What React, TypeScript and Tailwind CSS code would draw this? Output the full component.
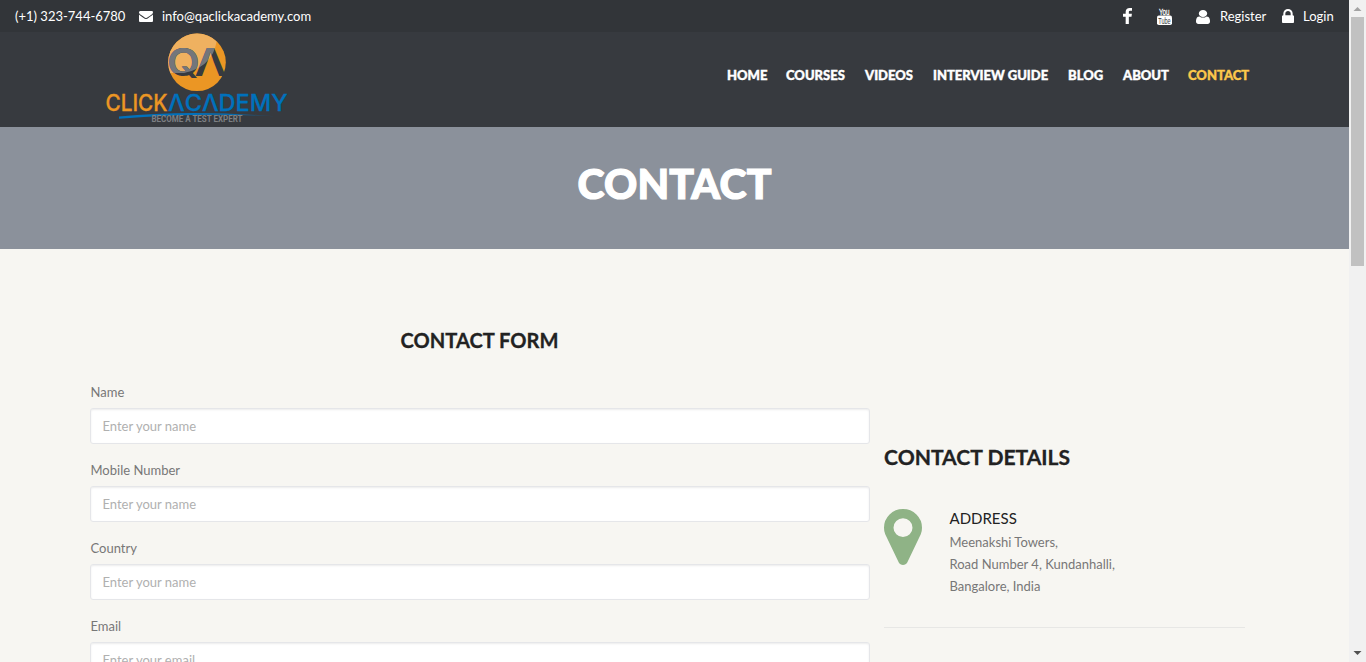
import type { ReactNode } from "react";

const paths = {
  envelope:
    "M1792 710v794q0 66-47 113t-113 47h-1472q-66 0-113-47t-47-113v-794q44 49 101 87 362 246 497 345 57 42 92.5 65.5t94.5 48 110 24.5h2q51 0 110-24.5t94.5-48 92.5-65.5q170-123 498-345 57-39 100-87zm0-294q0 79-49 151t-122 123q-376 261-468 325-10 7-42.5 31t-54 38.5-52 32.5-57.5 27-50 9h-2q-23 0-50-9t-57.5-27-52-32.5-54-38.5-42.5-31q-91-64-262-182.5t-205-142.5q-62-42-117-115.5t-55-136.5q0-78 41.5-130t118.5-52h1472q65 0 112.5 47t47.5 113z",
  facebook:
    "M1343 12v264h-157q-86 0-116 36t-30 108v189h293l-39 296h-254v759h-306v-759h-255v-296h255v-218q0-186 104-288.5t277-102.5q147 0 228 12z",
  user: "M1536 1399q0 109-62.5 187t-150.5 78h-854q-88 0-150.5-78t-62.5-187q0-85 8.5-160.5t31.5-152 58.5-131 94-89 134.5-34.5q131 128 313 128t313-128q76 0 134.5 34.5t94 89 58.5 131 31.5 152 8.5 160.5zm-256-887q0 159-112.5 271.5t-271.5 112.5-271.5-112.5-112.5-271.5 112.5-271.5 271.5-112.5 271.5 112.5 112.5 271.5z",
  lock: "M640 768h512v-192q0-106-75-181t-181-75-181 75-75 181v192zm832 96v576q0 40-28 68t-68 28h-960q-40 0-68-28t-28-68v-576q0-40 28-68t68-28h32v-192q0-184 132-316t316-132 316 132 132 316v192h32q40 0 68 28t28 68z",
  marker:
    "M1152 640q0-106-75-181t-181-75-181 75-75 181 75 181 181 75 181-75 75-181zm256 0q0 109-33 179l-364 774q-16 33-47.5 52t-67.5 19-67.5-19-46.5-52l-365-774q-33-70-33-179 0-212 150-362t362-150 362 150 150 362z",
};

function Icon({ d, box, className }: { d: string; box: string; className: string }) {
  return (
    <svg viewBox={box} preserveAspectRatio="none" className={`shrink-0 fill-current ${className}`}>
      <path d={d} />
    </svg>
  );
}

function YouTubeIcon() {
  return (
    <svg width="15" height="17" viewBox="0 0 15 17" className="shrink-0 overflow-visible font-['Liberation_Sans',sans-serif]">
      <text x="2" y="7.2" fontSize="9.500" textLength="10.500" lengthAdjust="spacingAndGlyphs" fill="#fff" stroke="#fff" strokeWidth="0.3">You</text>
      <rect x="0" y="7.6" width="15" height="9.400" rx="1.8" fill="#fff" />
      <text x="1.3" y="15.6" fontSize="9.500" textLength="12.4" lengthAdjust="spacingAndGlyphs" fill="#323539">Tube</text>
    </svg>
  );
}

function Monogram({ fill }: { fill: string }) {
  return (
    <g className="font-['Inter',sans-serif]" fontSize="38" fontWeight="600" fill={fill}>
      <text x="167" y="76.300" textLength="33" lengthAdjust="spacingAndGlyphs">Q</text>
      <text x="194.500" y="76.300" textLength="32" lengthAdjust="spacingAndGlyphs">Λ</text>
    </g>
  );
}

function Logo() {
  return (
    <svg width="182" height="92" viewBox="106 33 182 92" className="block overflow-visible font-['Liberation_Sans',sans-serif]">
      <defs>
        <clipPath id="disc"><circle cx="197" cy="62.3" r="28.8" /></clipPath>
        <clipPath id="shine"><path d="M160 30H217.500Q218 66 184 73L160 73Z" /></clipPath>
        <linearGradient id="swoosh">
          <stop offset="0" stopColor="#0071bc" />
          <stop offset="0.7" stopColor="#0071bc" />
          <stop offset="1" stopColor="#0071bc" stopOpacity="0.2" />
        </linearGradient>
      </defs>
      <circle cx="197" cy="62.3" r="28.8" fill="#eb9624" />
      <g clipPath="url(#disc)">
        <g clipPath="url(#shine)"><rect x="160" y="30" width="70" height="60" fill="#efb160" /></g>
      </g>
      <Monogram fill="#373a3f" />
      <g clipPath="url(#shine)"><Monogram fill="#73767b" /></g>
      <g className="font-['Inter',sans-serif]" fontSize="22.500" fontWeight="500">
        <text x="105.500" y="111.300" textLength="62" lengthAdjust="spacingAndGlyphs" fill="#eb9624" stroke="#eb9624" strokeWidth="0.3">CLICK</text>
        <text x="168" y="111.300" textLength="119.500" lengthAdjust="spacingAndGlyphs" fill="#0071bc" stroke="#0071bc" strokeWidth="0.3">ΛCΛDEMY</text>
      </g>
      <path d="M119 116.500Q190 109.500 275 116.300Q200 112 119 118.800Z" fill="url(#swoosh)" />
      <g className="font-['Roboto',sans-serif]">
        <text x="151.500" y="122.400" fontSize="8.300" fontWeight="700" textLength="91" lengthAdjust="spacingAndGlyphs" fill="#7c7f83">BECOME A TEST EXPERT</text>
      </g>
    </svg>
  );
}

function Field({ label, placeholder }: { label: string; placeholder: string }) {
  return (
    <label className="mb-[15px] block">
      <span className="mb-[5px] block h-[22px] pl-[0.5px] text-[13px] leading-[22px] text-[#777]">{label}</span>
      <input
        placeholder={placeholder}
        className="block h-9 w-full rounded-[3px] border border-[#e5e6e9] bg-white px-[11.5px] text-[13px] shadow-[inset_0_1px_2px_rgba(0,0,0,0.08)] outline-none placeholder:text-[#b0b0b0]"
      />
    </label>
  );
}

function NavItem({ children, active = false, className }: { children: ReactNode; active?: boolean; className: string }) {
  return (
    <a className={`block whitespace-nowrap ${active ? "text-[#fdc84b]" : "text-white"} ${className}`}>{children}</a>
  );
}

export default function App() {
  return (
    <div className="flex h-[662px] w-[1366px] overflow-hidden bg-[#f7f6f2] font-['Lato',sans-serif]">
      <div className="w-[1349px] shrink-0">
        <div className="flex h-8 items-center bg-[#323539] text-[13px] text-white">
          <span className="ml-[15px] w-[124px] pt-[2px] whitespace-nowrap">(+1) 323-744-6780</span>
          <Icon d={paths.envelope} box="0 256 1792 1408" className="mt-px h-[11px] w-[14px]" />
          <span className="ml-[9px] pt-[2px]">info@qaclickacademy.com</span>
          <div className="ml-auto flex h-8 items-center">
            <Icon d={paths.facebook} box="479 0 864 1664" className="mr-[25px] h-4 w-[9px]" />
            <YouTubeIcon />
            <Icon d={paths.user} box="256 128 1280 1536" className="mt-px ml-[24px] h-[14px] w-[14px]" />
            <span className="ml-[10px] w-[62px] pt-[2px]">Register</span>
            <Icon d={paths.lock} box="320 128 1152 1408" className="h-[14px] w-[12px]" />
            <span className="ml-[9px] w-[46px] pt-[2px]">Login</span>
          </div>
        </div>
        <header className="flex h-[95px] bg-[#373a3f]">
          <div className="ml-[106px] pt-px"><Logo /></div>
          <nav className="ml-auto flex h-[88px] w-[622px] items-center text-[13px] font-black [-webkit-text-stroke:0.4px]">
            <NavItem className="w-[59px]">HOME</NavItem>
            <NavItem className="w-[79px]">COURSES</NavItem>
            <NavItem className="w-[68px]">VIDEOS</NavItem>
            <NavItem className="w-[135px]">INTERVIEW GUIDE</NavItem>
            <NavItem className="w-[55px]">BLOG</NavItem>
            <NavItem className="w-[65px]">ABOUT</NavItem>
            <NavItem active className="">CONTACT</NavItem>
          </nav>
        </header>
        <section className="flex h-[122px] items-center justify-center bg-[#8b919b] pb-[10px]">
          <h1 className="text-[41px] leading-none font-black tracking-[0.2px] text-white [-webkit-text-stroke:1.2px]">CONTACT</h1>
        </section>
        <main className="flex pl-[90px]">
          <form className="w-[780px] pt-[78px]">
            <h2 className="mb-[28px] h-[26px] pr-px text-center text-[20.1px] leading-[26px] font-bold text-[#222] [-webkit-text-stroke:0.3px]">CONTACT FORM</h2>
            <Field label="Name" placeholder="Enter your name" />
            <Field label="Mobile Number" placeholder="Enter your name" />
            <Field label="Country" placeholder="Enter your name" />
            <Field label="Email" placeholder="Enter your email" />
          </form>
          <aside className="ml-[14px] w-[361px] pt-[194px]">
            <h2 className="h-7 text-[21.1px] leading-7 font-bold text-[#222] [-webkit-text-stroke:0.3px]">CONTACT DETAILS</h2>
            <div className="mt-[38px] flex h-[119px] border-b border-[#e7e7e5]">
              <Icon d={paths.marker} box="384 128 1024 1536" className="h-[56px] w-[38px] text-[#8fb386]" />
              <div className="ml-[27.5px] text-[13px] leading-[22px] text-[#777]">
                <h3 className="pb-1 text-[15px] leading-[18px] text-[#222]">ADDRESS</h3>
                <p>Meenakshi Towers,</p>
                <p>Road Number 4, Kundanhalli,</p>
                <p>Bangalore, India</p>
              </div>
            </div>
          </aside>
        </main>
      </div>
      <div className="flex w-[17px] shrink-0 flex-col items-center bg-[#f1f1f1]">
        <svg width="17" height="17" className="shrink-0"><path d="M4.500 11h8L8.500 7z" fill="#a3a3a3" /></svg>
        <div className="h-[249px] w-[13px] shrink-0 bg-[#c1c1c1]" />
        <svg width="17" height="17" className="mt-auto shrink-0"><path d="M4.500 6h8L8.500 10z" fill="#505050" /></svg>
      </div>
    </div>
  );
}
